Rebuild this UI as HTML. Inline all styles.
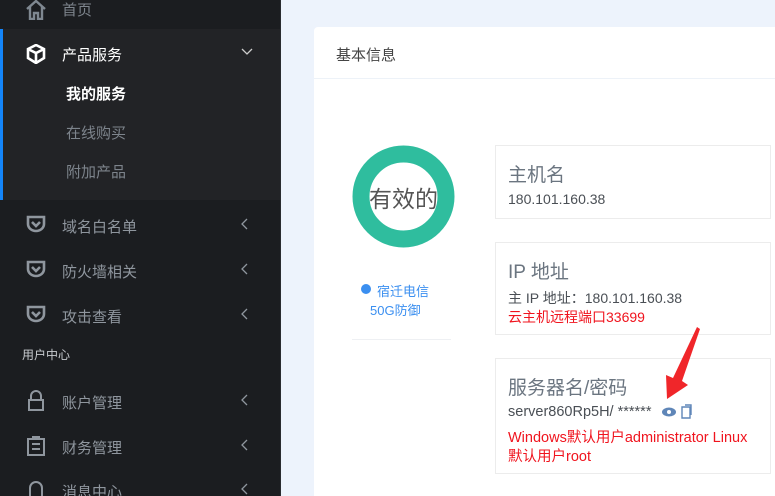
<!DOCTYPE html>
<html><head><meta charset="utf-8"><style>
*{margin:0;padding:0;box-sizing:border-box}
html,body{width:775px;height:496px;overflow:hidden}
body{background:#edf3fc;font-family:"Liberation Sans","Noto Sans CJK SC",sans-serif;position:relative}
.sb{position:absolute;left:0;top:0;width:281px;height:496px;background:#1b1d20;border-right:1px solid #2a2c30}
.act{position:absolute;left:0;top:29px;width:280px;height:171px;background:#222326}
.bar{position:absolute;left:0;top:29px;width:3px;height:171px;background:#1485f9}
.it{position:absolute;left:62px;font-size:15px;color:#8f969e}
.ic{position:absolute;left:25px}
.chev{position:absolute;left:241px}
.sub{position:absolute;left:66px;font-size:15px;color:#7d848c}
.card{position:absolute;left:314px;top:27px;width:470px;height:469px;background:#fff;border-radius:4px 0 0 0}
.hd{position:absolute;left:314px;top:27px;width:461px;height:52px;border-bottom:1px solid #edf2f8}
.box{position:absolute;left:495px;width:276px;border:1px solid #ececec;background:#fff}
.t{position:absolute;left:12px;font-size:19px;color:#6b7580}
.v{position:absolute;left:12px;font-size:14px;color:#4a4f55}
.r{color:#f0141e}
</style></head><body>
<div class="sb">
<div class="act"></div><div class="bar"></div>
<svg class="ic" style="top:0" width="22" height="20" viewBox="0 0 22 20"><path d="M2 9 L11 1 L20 9 M5 7 V19 H9 V13 H13 V19 H17 V7" fill="none" stroke="#7f8891" stroke-width="2.4"/></svg>
<div class="it" style="top:-1px;color:#7d848c">首页</div>
<svg class="ic" style="top:44px" width="22" height="20" viewBox="0 0 22 20"><path d="M11 1 L19 5 V14 L11 19 L3 14 V5Z M3 5 L11 9 L19 5 M11 9 V19" fill="none" stroke="#fff" stroke-width="2.6"/></svg>
<div class="it" style="top:44px;color:#fff">产品服务</div>
<svg class="chev" style="top:48px" width="12" height="8"><path d="M1 1 L6 6 L11 1" fill="none" stroke="#ccc" stroke-width="1.3"/></svg>
<div class="sub" style="top:83px;color:#fff;font-weight:bold">我的服务</div>
<div class="sub" style="top:122px">在线购买</div>
<div class="sub" style="top:161px">附加产品</div>
<svg class="ic" style="top:215px;left:26px" width="20" height="18" viewBox="0 0 20 18"><path d="M2 2 H18 V9 A8 7 0 0 1 2 9Z M6 7 L10 11 L14 7" fill="none" stroke="#8f969e" stroke-width="2.6"/></svg>
<div class="it" style="top:216px">域名白名单</div>
<svg class="chev" style="top:218px" width="8" height="12"><path d="M6 1 L1 6 L6 11" fill="none" stroke="#8f969e" stroke-width="1.3"/></svg>
<svg class="ic" style="top:260px;left:26px" width="20" height="18" viewBox="0 0 20 18"><path d="M2 2 H18 V9 A8 7 0 0 1 2 9Z M6 7 L10 11 L14 7" fill="none" stroke="#8f969e" stroke-width="2.6"/></svg>
<div class="it" style="top:261px">防火墙相关</div>
<svg class="chev" style="top:263px" width="8" height="12"><path d="M6 1 L1 6 L6 11" fill="none" stroke="#8f969e" stroke-width="1.3"/></svg>
<svg class="ic" style="top:305px;left:26px" width="20" height="18" viewBox="0 0 20 18"><path d="M2 2 H18 V9 A8 7 0 0 1 2 9Z M6 7 L10 11 L14 7" fill="none" stroke="#8f969e" stroke-width="2.6"/></svg>
<div class="it" style="top:306px">攻击查看</div>
<svg class="chev" style="top:308px" width="8" height="12"><path d="M6 1 L1 6 L6 11" fill="none" stroke="#8f969e" stroke-width="1.3"/></svg>
<div style="position:absolute;left:22px;top:346px;font-size:12px;color:#c8ccd0">用户中心</div>
<svg class="ic" style="top:390px;left:27px" width="18" height="22" viewBox="0 0 18 22"><path d="M4 10 V6 A5 5 0 0 1 14 6 V10 M2 10 H16 V20 H2Z" fill="none" stroke="#8f969e" stroke-width="2"/></svg>
<div class="it" style="top:392px">账户管理</div>
<svg class="chev" style="top:394px" width="8" height="12"><path d="M6 1 L1 6 L6 11" fill="none" stroke="#8f969e" stroke-width="1.3"/></svg>
<svg class="ic" style="top:435px;left:26px" width="20" height="22" viewBox="0 0 20 22"><path d="M6 2 H14 M2 4 H18 V20 H2Z M6 9 H14 M6 14 H14" fill="none" stroke="#8f969e" stroke-width="2"/></svg>
<div class="it" style="top:437px">财务管理</div>
<svg class="chev" style="top:439px" width="8" height="12"><path d="M6 1 L1 6 L6 11" fill="none" stroke="#8f969e" stroke-width="1.3"/></svg>
<svg class="ic" style="top:480px;left:27px" width="18" height="22" viewBox="0 0 18 22"><path d="M3 20 V8 A6 6 0 0 1 15 8 V20" fill="none" stroke="#8f969e" stroke-width="2"/></svg>
<div class="it" style="top:481px">消息中心</div>
<svg class="chev" style="top:483px" width="8" height="12"><path d="M6 1 L1 6 L6 11" fill="none" stroke="#8f969e" stroke-width="1.3"/></svg>
</div>
<div class="card"></div>
<div class="hd"><div style="position:absolute;left:22px;top:17px;font-size:15px;color:#444">基本信息</div></div>
<svg style="position:absolute;left:352px;top:145px" width="103" height="103"><circle cx="51.5" cy="51.5" r="42.5" fill="none" stroke="#2fbd9e" stroke-width="17"/></svg>
<div style="position:absolute;left:352px;top:180px;width:103px;text-align:center;font-size:23px;color:#555">有效的</div>
<div style="position:absolute;left:361px;top:284px;width:10px;height:10px;border-radius:50%;background:#3b8ff0"></div>
<div style="position:absolute;left:377px;top:281px;font-size:13px;color:#3b8ff0">宿迁电信</div>
<div style="position:absolute;left:370px;top:300px;font-size:13px;color:#3b8ff0">50G防御</div>
<div style="position:absolute;left:352px;top:339px;width:99px;height:1px;background:#eef0f3"></div>
<div class="box" style="top:145px;height:74px"><div class="t" style="top:14px">主机名</div><div class="v" style="top:45px">180.101.160.38</div></div>
<div class="box" style="top:242px;height:93px"><div class="t" style="top:14px">IP 地址</div><div class="v" style="top:45px">主 IP 地址：180.101.160.38</div><div class="v r" style="top:64px">云主机远程端口33699</div></div>
<div class="box" style="top:358px;height:116px"><div class="t" style="top:14px">服务器名/密码</div><div class="v" style="top:45px;font-size:14.5px">server860Rp5H/ ******</div>
<svg style="position:absolute;left:165px;top:45px" width="32" height="16"><ellipse cx="8" cy="8" rx="7" ry="4.5" fill="#5f86b8"/><circle cx="8" cy="8" r="2" fill="#fff"/><path d="M21 3 V14 H29 V3Z M24 1 H30 V11" fill="none" stroke="#5f86b8" stroke-width="1.4"/></svg>
<div class="v r" style="top:67px;font-size:14.5px">Windows默认用户administrator Linux</div><div class="v r" style="top:86px;font-size:14.5px">默认用户root</div></div>
<svg style="position:absolute;left:0;top:0" width="775" height="496"><path d="M697 327 L700 329 L682 381 L688 385 L667 399 L666 375 L673 378Z" fill="#f0262a"/></svg>
</body></html>
